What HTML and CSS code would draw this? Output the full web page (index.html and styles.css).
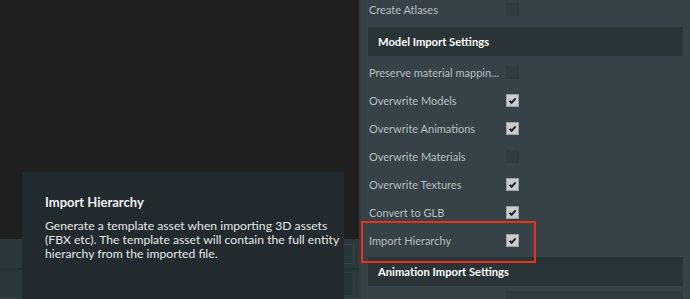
FILE: index.html
```html
<!DOCTYPE html>
<html>
<head>
<meta charset="utf-8">
<link rel="stylesheet" href="styles.css">
</head>
<body>
<div class="app">
  <div class="left">
    <div class="viewport"></div>
    <div class="strip">
      <div class="strip-row r1"><div class="field"><span class="dots">⋮</span></div></div>
      <div class="strip-row r2"><div class="field f2"></div></div>
    </div>
    <div class="tooltip">
      <div class="tt-title">Import Hierarchy</div>
      <div class="tt-body">Generate a template asset when importing 3D assets<br>(FBX etc). The template asset will contain the full entity<br>hierarchy from the imported file.</div>
    </div>
  </div>
  <div class="panel">
    <div class="row first"><span class="label">Create Atlases</span><span class="box"></span></div>
    <div class="header">Model Import Settings</div>
    <div class="row"><span class="label">Preserve material mappin...</span><span class="box"></span></div>
    <div class="row"><span class="label">Overwrite Models</span><span class="box on"><svg viewBox="0 0 13 13" width="13" height="13"><path d="M3.5 6.8 L5.6 8.8 L9.6 4.4" fill="none" stroke="#1d2326" stroke-width="2"/></svg></span></div>
    <div class="row"><span class="label">Overwrite Animations</span><span class="box on"><svg viewBox="0 0 13 13" width="13" height="13"><path d="M3.5 6.8 L5.6 8.8 L9.6 4.4" fill="none" stroke="#1d2326" stroke-width="2"/></svg></span></div>
    <div class="row"><span class="label">Overwrite Materials</span><span class="box"></span></div>
    <div class="row"><span class="label">Overwrite Textures</span><span class="box on"><svg viewBox="0 0 13 13" width="13" height="13"><path d="M3.5 6.8 L5.6 8.8 L9.6 4.4" fill="none" stroke="#1d2326" stroke-width="2"/></svg></span></div>
    <div class="row"><span class="label">Convert to GLB</span><span class="box on"><svg viewBox="0 0 13 13" width="13" height="13"><path d="M3.5 6.8 L5.6 8.8 L9.6 4.4" fill="none" stroke="#1d2326" stroke-width="2"/></svg></span></div>
    <div class="row"><span class="label">Import Hierarchy</span><span class="box on"><svg viewBox="0 0 13 13" width="13" height="13"><path d="M3.5 6.8 L5.6 8.8 L9.6 4.4" fill="none" stroke="#1d2326" stroke-width="2"/></svg></span></div>
    <div class="header h2">Animation Import Settings</div>
    <div class="row"><span class="label">Meshing Strategy</span><span class="select"></span></div>
    <div class="highlight"></div>
  </div>
</div>
</body>
</html>
```

FILE: styles.css
```css
html, body {
  margin: 0;
  padding: 0;
}
body {
  width: 690px;
  height: 299px;
  overflow: hidden;
  background: #1f1f1f;
  font-family: Lato, "Liberation Sans", sans-serif;
}
.app {
  display: flex;
  height: 299px;
}
.left {
  position: relative;
  width: 359px;
  display: flex;
  flex-direction: column;
}
.viewport {
  flex: 1;
  background: #1f1f1f;
}
.strip {
  height: 60px;
  background: #313d40;
  display: flex;
  flex-direction: column;
}
.strip-row {
  background: #2b373a;
  display: flex;
  align-items: center;
  justify-content: flex-end;
  padding-right: 5px;
}
.strip-row.r1 {
  height: 29px;
  border-bottom: 2px solid #253033;
}
.strip-row.r2 {
  height: 27px;
}
.field {
  position: relative;
  width: 40px;
  height: 18px;
  border: 1px solid #3c474a;
  border-radius: 3px;
  background: #2a3538;
}
.field.f2 {
  height: 22px;
  border-color: #34403f;
}
.dots {
  position: absolute;
  right: 6px;
  top: 1px;
  font-size: 12px;
  line-height: 16px;
  color: #7f8a8c;
}
.tooltip {
  position: absolute;
  left: 22px;
  top: 172px;
  width: 322px;
  height: 140px;
  background: #222a2d;
  box-sizing: border-box;
  padding: 22px 4px 0 23px;
}
.tt-title {
  font-size: 13px;
  font-weight: 700;
  line-height: 16px;
  color: #eef1f1;
}
.tt-body {
  margin-top: 9px;
  font-size: 12.2px;
  line-height: 14px;
  color: #e4e8e9;
  white-space: nowrap;
}
.panel {
  position: relative;
  flex: 1;
  background: #364245;
  border-left: 2px solid #323d40;
  padding: 0 7px 0 8px;
  overflow: hidden;
}
.row {
  display: flex;
  align-items: center;
  height: 28px;
}
.row.first {
  margin-top: -5px;
}
.label {
  width: 137px;
  font-size: 11px;
  color: #b7bfc1;
  white-space: nowrap;
}
.box {
  width: 13px;
  height: 13px;
  box-sizing: border-box;
  background: #2f3b3e;
  display: flex;
}
.box.on {
  background: #c9cccd;
  border: 1px solid #9aa1a3;
}
.box.on svg {
  margin: -1px;
}
.select {
  flex: 1;
  height: 24px;
  background: #2f3b3e;
  border-radius: 2px;
}
.header {
  height: 29px;
  margin: 4px 0 2px -1px;
  padding-left: 10px;
  background: #2a3437;
  color: #ffffff;
  font-size: 11.2px;
  font-weight: 700;
  display: flex;
  align-items: center;
}
.header.h2 {
  margin-top: 3px;
  margin-bottom: 3px;
}
.highlight {
  position: absolute;
  left: 0;
  top: 221px;
  width: 171px;
  height: 38px;
  border: 2px solid #e5311d;
}
```
